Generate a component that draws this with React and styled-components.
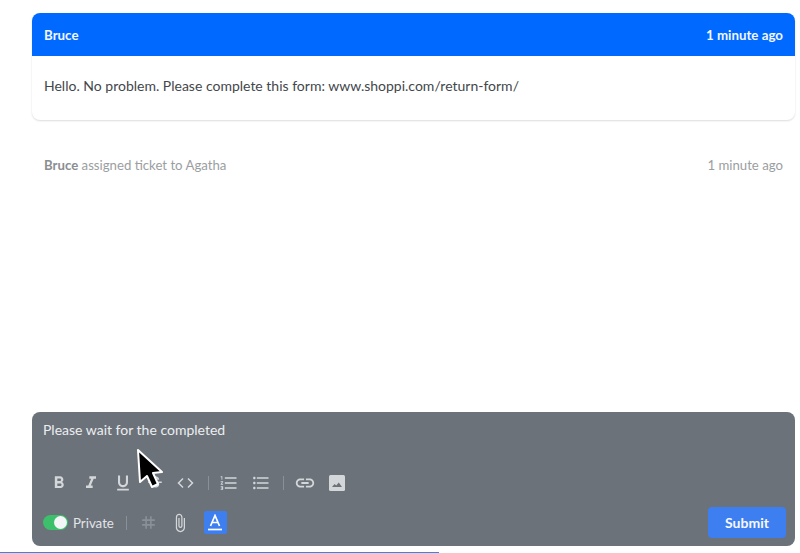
import styled, { createGlobalStyle } from "styled-components";
import {
  MdFormatBold,
  MdFormatItalic,
  MdFormatUnderlined,
  MdStrikethroughS,
  MdFormatListNumbered,
  MdFormatListBulleted,
  MdLink,
  MdAttachFile,
  MdTag,
} from "react-icons/md";

const GlobalStyle = createGlobalStyle`
  html, body { margin: 0; padding: 0; background: #fff; }
  body { font-family: Lato, "Open Sans", sans-serif; overflow: hidden; }
`;

const Page = styled.div`
  position: relative;
  width: 800px;
  height: 553px;
  box-sizing: border-box;
  padding: 13px 5px 7px 32px;
  display: flex;
  flex-direction: column;
`;

const Card = styled.div`
  border-radius: 8px;
  box-shadow: 0 1px 2px rgba(0, 0, 0, 0.14);
  overflow: hidden;
`;

const CardHeader = styled.div`
  height: 43px;
  box-sizing: border-box;
  padding: 0 12px;
  background: #0069ff;
  color: #f2f7ff;
  display: flex;
  align-items: center;
  justify-content: space-between;
  font-size: 13.3px;
  font-weight: 700;
`;

const CardBody = styled.div`
  height: 64px;
  box-sizing: border-box;
  padding: 20px 12px 0;
  font-size: 14px;
  line-height: 19px;
  color: #43474b;
`;

const Activity = styled.div`
  display: flex;
  justify-content: space-between;
  padding: 36px 12px 0;
  font-size: 13.2px;
  line-height: 18px;
  color: #9b9ea1;
  b { font-weight: 700; color: #8b8e91; }
`;

const Editor = styled.div`
  margin-top: auto;
  height: 134px;
  box-sizing: border-box;
  padding: 9px 9px 8px 11px;
  background: #6b727a;
  border-radius: 8px;
  display: flex;
  flex-direction: column;
  color: #eceef0;
`;

const Draft = styled.div`
  font-size: 14px;
  line-height: 18px;
`;

const Toolbar = styled.div`
  margin-top: 33px;
  height: 22px;
  display: flex;
  align-items: center;
`;

const Tool = styled.span`
  width: ${(p) => p.$w || 32}px;
  display: flex;
  justify-content: center;
  color: #d4d7da;
  opacity: ${(p) => p.$dim || 1};
`;

const Divider = styled.span`
  width: 1px;
  height: 14px;
  background: #8a9098;
  margin: ${(p) => p.$m || "0 5px"};
`;

const Footer = styled.div`
  margin-top: auto;
  display: flex;
  align-items: center;
`;

const Switch = styled.span`
  position: relative;
  width: 25px;
  height: 15px;
  border-radius: 8px;
  background: #3cc06c;
  &::after {
    content: "";
    position: absolute;
    right: 1px;
    top: 1px;
    width: 13px;
    height: 13px;
    border-radius: 50%;
    background: #f4f5f6;
  }
`;

const SwitchLabel = styled.span`
  margin-left: 5px;
  font-size: 13.3px;
  color: #e2e4e7;
`;

const FormatButton = styled.span`
  width: 23px;
  height: 23px;
  margin-left: 8px;
  background: #3d7ef0;
  border-radius: 2px;
  display: flex;
  align-items: center;
  justify-content: center;
`;

const Submit = styled.button`
  margin-left: auto;
  width: 78px;
  height: 31px;
  border: 0;
  border-radius: 4px;
  background: #3d7ef0;
  color: #f5f8fe;
  font: 700 14px Lato, sans-serif;
`;

const Cursor = styled.svg`
  position: absolute;
  left: 134px;
  top: 447px;
`;

const Progress = styled.div`
  position: absolute;
  left: 0;
  bottom: 0;
  height: 1px;
  width: 439px;
  background: #3f82e0;
`;

function ImageIcon() {
  return (
    <svg width="16" height="16" viewBox="0 0 16 16">
      <rect width="16" height="16" rx="1.5" fill="#d4d7da" />
      <path d="M3 12l2.6-3 1.6 1.6L9.8 7.5 13 12z" fill="#6b727a" />
    </svg>
  );
}

function CodeIcon() {
  return (
    <svg width="17" height="12" viewBox="0 0 17 12" fill="none" stroke="#d4d7da" strokeWidth="1.5">
      <path d="M6 1.5L1.5 6 6 10.5M11 1.5L15.5 6 11 10.5" />
    </svg>
  );
}

function FormatIcon() {
  return (
    <svg width="16" height="17" viewBox="0 0 16 17" fill="none" stroke="#fff" strokeWidth="1.7">
      <path d="M3.5 12L8 1.5 12.5 12M5 8.5h6" />
      <path d="M1 15.5h14" />
    </svg>
  );
}

export default function App() {
  return (
    <Page>
      <GlobalStyle />
      <Card>
        <CardHeader>
          <span>Bruce</span>
          <span>1 minute ago</span>
        </CardHeader>
        <CardBody>Hello. No problem. Please complete this form: www.shoppi.com/return-form/</CardBody>
      </Card>
      <Activity>
        <span>
          <b>Bruce</b> assigned ticket to Agatha
        </span>
        <span>1 minute ago</span>
      </Activity>
      <Editor>
        <Draft>Please wait for the completed</Draft>
        <Toolbar>
          <Tool><MdFormatBold size={20} /></Tool>
          <Tool><MdFormatItalic size={20} /></Tool>
          <Tool><MdFormatUnderlined size={20} /></Tool>
          <Tool><MdStrikethroughS size={18} /></Tool>
          <Tool $w={28}><CodeIcon /></Tool>
          <Divider $m="0 4px 0 9px" />
          <Tool><MdFormatListNumbered size={20} /></Tool>
          <Tool><MdFormatListBulleted size={20} /></Tool>
          <Divider $m="0 5px 0 6px" />
          <Tool><MdLink size={22} /></Tool>
          <Tool><ImageIcon /></Tool>
        </Toolbar>
        <Footer>
          <Switch />
          <SwitchLabel>Private</SwitchLabel>
          <Divider $m="0 6px 0 12px" />
          <Tool $dim={0.3} $w={31}><MdTag size={19} /></Tool>
          <Tool><MdAttachFile size={20} /></Tool>
          <FormatButton><FormatIcon /></FormatButton>
          <Submit>Submit</Submit>
        </Footer>
      </Editor>
      <Cursor width="30" height="44" viewBox="0 0 30 44">
        <path d="M4 3L28 25 19 26 24 37 18 40 13 29 6 35z" fill="#000" stroke="#fff" strokeWidth="2" strokeLinejoin="round" />
      </Cursor>
      <Progress />
    </Page>
  );
}
